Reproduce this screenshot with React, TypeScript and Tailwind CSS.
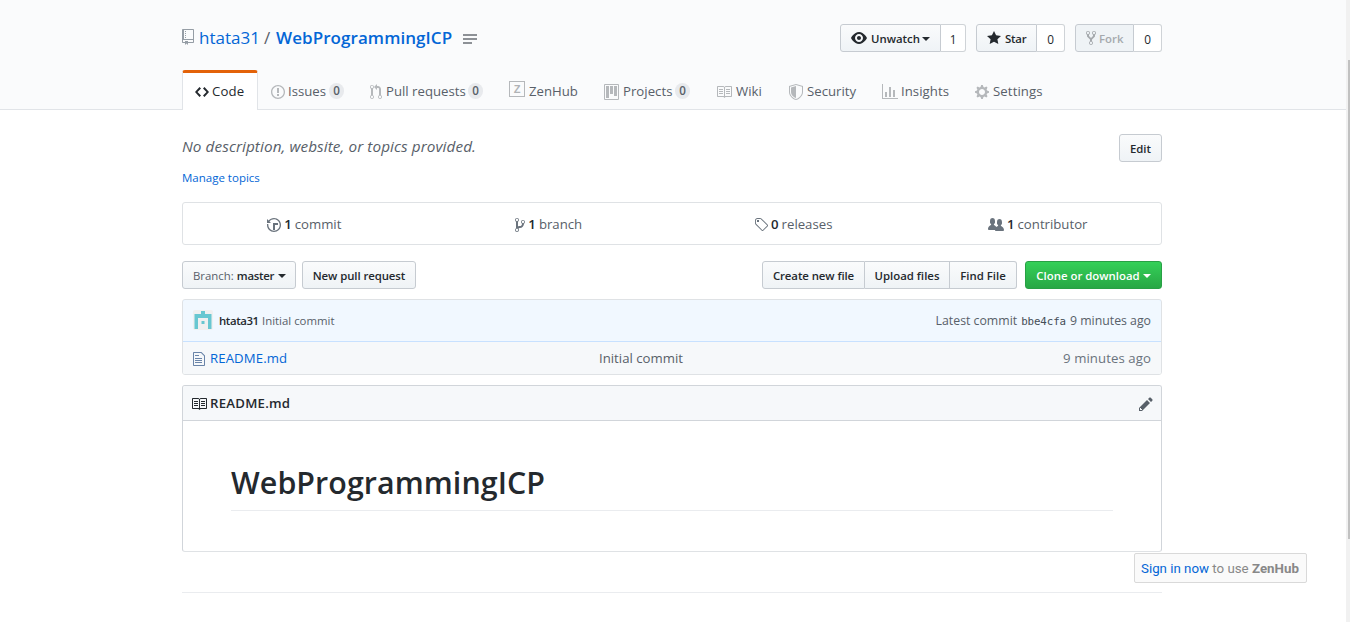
import React from "react";

type IconProps = { d: string; w: number; className?: string };

function Octicon({ d, w, className = "" }: IconProps) {
  return (
    <svg
      width={w}
      height={16}
      viewBox={`0 0 ${w} 16`}
      fill="currentColor"
      fillRule="evenodd"
      className={`shrink-0 ${className}`}
      aria-hidden="true"
    >
      <path d={d} />
    </svg>
  );
}

const icons = {
  repo: "M4 9H3V8h1v1zm0-3H3v1h1V6zm0-2H3v1h1V4zm0-2H3v1h1V2zm8-1v12c0 .55-.45 1-1 1H6v2l-1.5-1.5L3 16v-2H1c-.55 0-1-.45-1-1V1c0-.55.45-1 1-1h10c.55 0 1 .45 1 1zm-1 10H1v2h2v-1h3v1h5v-2zm0-10H2v9h9V1z",
  eye: "M8.06 2C3 2 0 8 0 8s3 6 8.06 6C13 14 16 8 16 8s-3-6-7.94-6zM8 12c-2.2 0-4-1.78-4-4 0-2.2 1.8-4 4-4 2.22 0 4 1.8 4 4 0 2.22-1.78 4-4 4zm2-4c0 1.11-.89 2-2 2-1.11 0-2-.89-2-2 0-1.11.89-2 2-2 1.11 0 2 .89 2 2z",
  star: "M14 6l-4.9-.64L7 1 4.9 5.36 0 6l3.6 3.26L2.67 14 7 11.67 11.33 14l-.93-4.74L14 6z",
  fork: "M8 1a1.993 1.993 0 0 0-1 3.72V6L5 8 3 6V4.72A1.993 1.993 0 0 0 2 1a1.993 1.993 0 0 0-1 3.72V6.5l3 3v1.78A1.993 1.993 0 0 0 5 15a1.993 1.993 0 0 0 1-3.72V9.5l3-3V4.72A1.993 1.993 0 0 0 8 1zM2 4.2C1.34 4.2.8 3.65.8 3c0-.65.55-1.2 1.2-1.2.65 0 1.2.55 1.2 1.2 0 .65-.55 1.2-1.2 1.2zm3 10c-.66 0-1.2-.55-1.2-1.2 0-.65.55-1.2 1.2-1.2.65 0 1.2.55 1.2 1.2 0 .65-.55 1.2-1.2 1.2zm3-10c-.66 0-1.2-.55-1.2-1.2 0-.65.55-1.2 1.2-1.2.65 0 1.2.55 1.2 1.2 0 .65-.55 1.2-1.2 1.2z",
  code: "M9.5 3L8 4.5 11.5 8 8 11.5 9.5 13 14 8 9.5 3zm-5 0L0 8l4.5 5L6 11.5 2.5 8 6 4.5 4.5 3z",
  issue: "M7 2.3c3.14 0 5.7 2.56 5.7 5.7s-2.56 5.7-5.7 5.7A5.71 5.71 0 0 1 1.3 8c0-3.14 2.56-5.7 5.7-5.7zM7 1C3.14 1 0 4.14 0 8s3.14 7 7 7 7-3.14 7-7-3.14-7-7-7zm1 3H6v5h2V4zm0 6H6v2h2v-2z",
  pull: "M11 11.28V5c-.03-.78-.34-1.47-.94-2.06C9.46 2.35 8.78 2.03 8 2H7V0L4 3l3 3V4h1c.27.02.48.11.69.31.21.2.3.42.31.69v6.28A1.993 1.993 0 0 0 10 15a1.993 1.993 0 0 0 1-3.72zm-1 2.92c-.66 0-1.2-.55-1.2-1.2 0-.65.55-1.2 1.2-1.2.65 0 1.2.55 1.2 1.2 0 .65-.55 1.2-1.2 1.2zM4 3c0-1.11-.89-2-2-2a1.993 1.993 0 0 0-1 3.72v6.56A1.993 1.993 0 0 0 2 15a1.993 1.993 0 0 0 1-3.72V4.72c.59-.34 1-.98 1-1.72zm-.8 10c0 .66-.55 1.2-1.2 1.2-.65 0-1.2-.55-1.2-1.2 0-.65.55-1.2 1.2-1.2.65 0 1.2.55 1.2 1.2zM2 4.2C1.34 4.2.8 3.65.8 3c0-.65.55-1.2 1.2-1.2.65 0 1.2.55 1.2 1.2 0 .65-.55 1.2-1.2 1.2z",
  project:
    "M10 12h3V2h-3v10zm-4-2h3V2H6v8zm-4 4h3V2H2v12zm-1 1h13V1H1v14zM14 0H1a1 1 0 0 0-1 1v14a1 1 0 0 0 1 1h13a1 1 0 0 0 1-1V1a1 1 0 0 0-1-1z",
  book: "M3 5h4v1H3V5zm0 3h4V7H3v1zm0 2h4V9H3v1zm11-5h-4v1h4V5zm0 2h-4v1h4V7zm0 2h-4v1h4V9zm2-6v9c0 .55-.45 1-1 1H9.5l-1 1-1-1H2c-.55 0-1-.45-1-1V3c0-.55.45-1 1-1h5.5l1 1 1-1H15c.55 0 1 .45 1 1zm-8 .5L7.5 3H2v9h6V3.5zm7-.5H9.5l-.5.5V12h6V3z",
  shield:
    "M0 2l7-2 7 2v6.02C14 12.69 8.69 16 7 16c-1.69 0-7-3.31-7-7.98V2zm1 .75L7 1l6 1.75v5.268C13 12.104 8.449 15 7 15c-1.449 0-6-2.896-6-6.982V2.75zm1 .75L7 2v12c-1.207 0-5-2.482-5-5.985V3.5z",
  graph: "M16 14v1H0V0h1v14h15zM5 13H3V8h2v5zm4 0H7V3h2v10zm4 0h-2V6h2v7z",
  gear: "M14 8.77v-1.6l-1.94-.64-.45-1.09.88-1.84-1.13-1.13-1.81.91-1.09-.45-.69-1.92h-1.6l-.63 1.94-1.11.45-1.84-.88-1.13 1.13.91 1.81-.45 1.09L0 7.23v1.59l1.94.64.45 1.09-.88 1.84 1.13 1.13 1.81-.91 1.09.45.69 1.92h1.59l.63-1.94 1.11-.45 1.84.88 1.13-1.13-.92-1.81.47-1.09L14 8.75v.02zM7 11c-1.66 0-3-1.34-3-3s1.34-3 3-3 3 1.34 3 3-1.34 3-3 3z",
  history:
    "M8 13H6V6h5v2H8v5zM7 1C4.81 1 2.87 2.02 1.59 3.59L0 2v4h4L2.5 4.5C3.55 3.17 5.17 2.3 7 2.3c3.14 0 5.7 2.56 5.7 5.7s-2.56 5.7-5.7 5.7A5.71 5.71 0 0 1 1.3 8c0-.34.03-.67.09-1H.08C.03 7.33 0 7.66 0 8c0 3.86 3.14 7 7 7s7-3.14 7-7-3.14-7-7-7z",
  branch:
    "M10 5c0-1.11-.89-2-2-2a1.993 1.993 0 0 0-1 3.72v.3c-.02.52-.23.98-.63 1.38-.4.4-.86.61-1.38.63-.83.02-1.48.16-2 .45V4.72a1.993 1.993 0 0 0-1-3.72C.88 1 0 1.89 0 3a2 2 0 0 0 1 1.72v6.56c-.59.35-1 .99-1 1.72 0 1.11.89 2 2 2 1.11 0 2-.89 2-2 0-.53-.2-1-.53-1.36.09-.06.48-.41.59-.47.25-.11.56-.17.94-.17 1.05-.05 1.95-.45 2.75-1.25S8.95 7.77 9 6.73h-.02C9.59 6.37 10 5.73 10 5zM2 1.8c.66 0 1.2.55 1.2 1.2 0 .65-.55 1.2-1.2 1.2C1.35 4.2.8 3.65.8 3c0-.65.55-1.2 1.2-1.2zm0 12.41c-.66 0-1.2-.55-1.2-1.2 0-.65.55-1.2 1.2-1.2.65 0 1.2.55 1.2 1.2 0 .65-.55 1.2-1.2 1.2zm6-8c-.66 0-1.2-.55-1.2-1.2 0-.65.55-1.2 1.2-1.2.65 0 1.2.55 1.2 1.2 0 .65-.55 1.2-1.2 1.2z",
  tag: "M7.73 1.73C7.26 1.26 6.62 1 5.96 1H3.5C2.13 1 1 2.13 1 3.5v2.47c0 .66.27 1.3.73 1.77l6.06 6.06c.39.39 1.02.39 1.41 0l4.59-4.59a.996.996 0 0 0 0-1.41L7.73 1.73zM2.38 7.09c-.31-.3-.47-.7-.47-1.13V3.5c0-.88.72-1.59 1.59-1.59h2.47c.42 0 .83.16 1.13.47l6.14 6.13-4.73 4.73-6.13-6.15zM3.01 3h2v2H3V3h.01z",
  organization:
    "M16 12.999c0 .439-.45 1-1 1H7.995c-.539 0-.994-.447-.995-.999H1c-.54 0-1-.561-1-1 0-2.634 3-4 3-4s.229-.409 0-1c-.841-.621-1.058-.59-1-3 .058-2.419 1.367-3 2.5-3s2.442.58 2.5 3c.058 2.41-.159 2.379-1 3-.229.59 0 1 0 1s1.549.711 2.42 2.088C9.196 9.369 10 8.999 10 8.999s.229-.409 0-1c-.841-.62-1.058-.59-1-3 .058-2.419 1.367-3 2.5-3s2.437.581 2.495 3c.059 2.41-.158 2.38-1 3-.229.59 0 1 0 1s3.005 1.366 3.005 4z",
  file: "M6 5H2V4h4v1zM2 8h7V7H2v1zm0 2h7V9H2v1zm0 2h7v-1H2v1zm10-7.5V14c0 .55-.45 1-1 1H1c-.55 0-1-.45-1-1V2c0-.55.45-1 1-1h7.5L12 4.5zM11 5L8 2H1v12h10V5z",
  pencil:
    "M0 12v3h3l8-8-3-3-8 8zm3 2H1v-2h1v1h1v1zm10.3-9.3L12 6 9 3l1.3-1.3a.996.996 0 0 1 1.41 0l1.59 1.59c.39.39.39 1.02 0 1.41z",
};

function Caret({ className = "" }: { className?: string }) {
  return (
    <span
      className={`inline-block shrink-0 border-x-4 border-t-4 border-x-transparent border-t-current ${className}`}
    />
  );
}

const btnBase =
  "flex h-7 items-center border border-[#c6cbd1] bg-linear-to-b to-[#eff3f6] pt-px text-[11.4px] font-semibold";
const btn = `${btnBase} from-[#fafbfc] text-[#24292e]`;
const btnDisabled = `${btnBase} from-[#eff3f6] text-[#a5a9ad]`;

const count =
  "flex h-7 items-center justify-center rounded-r-[3px] border border-l-0 border-[#cfd3d7] bg-white pt-px text-[11.8px] font-medium text-[#24292e]";

function ZenIcon() {
  return (
    <span className="-mt-[3px] flex h-4 w-4 shrink-0 items-center justify-center border border-[#b5b8bb] font-['Liberation_Sans',sans-serif] text-[11px] leading-none font-bold text-[#b0b3b6]">
      Z
    </span>
  );
}

const tabs: { label: string; icon?: string; w?: number; width: string; text: string; count?: string }[] = [
  { label: "Issues", icon: icons.issue, w: 14, width: "w-[99px]", text: "ml-[3px] w-[37px]", count: "0" },
  { label: "Pull requests", icon: icons.pull, w: 12, width: "w-[139px]", text: "ml-1 w-[78px]", count: "0" },
  { label: "ZenHub", width: "w-[95px]", text: "ml-1 w-[50px]" },
  { label: "Projects", icon: icons.project, w: 15, width: "w-[112px]", text: "ml-1 w-12 tracking-[0.02px]", count: "0" },
  { label: "Wiki", icon: icons.book, w: 16, width: "w-[73px]", text: "ml-1 w-[27px]" },
  { label: "Security", icon: icons.shield, w: 14, width: "w-[93px]", text: "ml-1 w-[49px]" },
  { label: "Insights", icon: icons.graph, w: 16, width: "w-[93px]", text: "ml-[3px] w-[49px] tracking-[0.05px]" },
  { label: "Settings", icon: icons.gear, w: 14, width: "w-[94px]", text: "ml-1 w-[50px] tracking-[0.1px]" },
];

const stats = [
  { n: "1", label: "commit", icon: icons.history, w: 14 },
  { n: "1", label: "branch", icon: icons.branch, w: 10 },
  { n: "0", label: "releases", icon: icons.tag, w: 14 },
  { n: "1", label: "contributor", icon: icons.organization, w: 16 },
];

export default function App() {
  return (
    <div className="relative flex h-[622px] w-[1350px] overflow-hidden bg-white font-['Open_Sans','Noto_Sans',sans-serif] text-[13.2px] leading-5 whitespace-nowrap text-[#24292e]">
      <div className="w-[1346px]">
        <header className="h-[110px] border-b border-[#e1e4e8] bg-[#fafbfc] pl-[182px]">
          <div className="flex h-[70px] w-[980px] items-start justify-between pt-6">
            <h1 className="flex h-7 items-center text-[17px] text-[#0366d6]">
              <Octicon d={icons.repo} w={12} className="-mt-0.5 mr-[5px] text-[#959da5]" />
              <span className="w-[61px]">htata31</span>
              <span className="ml-1 w-3 text-[#586069]">/</span>
              <span className="w-[177px] font-semibold tracking-[0.07px]">WebProgrammingICP</span>
              <span className="mt-0.5 ml-[10px] flex flex-col gap-0.5">
                <span className="h-0.5 w-3.5 bg-[#8d9196]" />
                <span className="h-0.5 w-3.5 bg-[#8d9196]" />
                <span className="h-0.5 w-[9px] bg-[#8d9196]" />
              </span>
            </h1>
            <div className="flex gap-2.5">
              <div className="flex">
                <button className={`${btn} w-[101px] rounded-l-[3px] pl-2.5`}>
                  <Octicon d={icons.eye} w={16} className="-mt-px mr-1" />
                  <span className="w-[47px] text-left">Unwatch</span>
                  <Caret className="ml-1" />
                </button>
                <span className={`${count} w-[25px]`}>1</span>
              </div>
              <div className="flex">
                <button className={`${btn} w-[61px] rounded-l-[3px] pl-2.5`}>
                  <Octicon d={icons.star} w={14} className="-mt-px mr-1" />
                  <span className="tracking-[-0.2px]">Star</span>
                </button>
                <span className={`${count} w-7`}>0</span>
              </div>
              <div className="flex">
                <button className={`${btnDisabled} w-[59px] rounded-l-[3px] pl-2.5`}>
                  <Octicon d={icons.fork} w={10} className="-mt-px mr-[3px]" />
                  Fork
                </button>
                <span className={`${count} w-7`}>0</span>
              </div>
            </div>
          </div>
          <nav className="flex h-10 items-stretch text-[#586069]">
            <a className="flex w-[76px] items-center rounded-t-[3px] border-x border-t-[3px] border-x-[#e1e4e8] border-t-[#e36209] bg-white pb-0.5 pl-3 text-[#24292e]">
              <Octicon d={icons.code} w={14} className="mt-[3px] mr-[3px]" />
              <span className="tracking-[0.15px]">Code</span>
            </a>
            {tabs.map((t) => (
              <a key={t.label} className={`flex items-center pt-px pl-[13px] ${t.width}`}>
                {t.icon ? (
                  <Octicon d={t.icon} w={t.w ?? 16} className="mt-[3px] text-[#b5b8bb]" />
                ) : (
                  <ZenIcon />
                )}
                <span className={t.text}>{t.label}</span>
                {t.count && (
                  <span className="ml-1 flex h-4 w-[15px] items-center justify-center rounded-full bg-[#e8eaed] pt-px text-[11.6px] leading-none font-semibold">
                    {t.count}
                  </span>
                )}
              </a>
            ))}
          </nav>
        </header>

        <main className="ml-[182px] w-[980px]">
          <div className="flex h-[92px] justify-between pt-6">
            <div>
              <p className="text-[15.3px] leading-6 tracking-[0.08px] text-[#586069] italic">
                No description, website, or topics provided.
              </p>
              <a className="mt-[11px] block text-[11.5px] leading-[18px] text-[#0366d6]">Manage topics</a>
            </div>
            <button className={`${btn} w-[43px] justify-center rounded-[3px]`}>Edit</button>
          </div>

          <div className="flex h-[43px] items-center rounded-[3px] border border-[#dfe2e5] text-[#586069]">
            {stats.map((s) => (
              <div key={s.label} className="flex flex-1 items-center justify-center pr-0.5">
                <Octicon d={s.icon} w={s.w} className="mt-0.5 mr-1 text-[#6a737d]" />
                <span className="mr-[3px] -ml-px font-semibold text-[#24292e]">{s.n}</span>
                {s.label}
              </div>
            ))}
          </div>

          <div className="mt-4 flex h-7">
            <button className={`${btn} w-[114px] rounded-[3px] pl-2.5`}>
              <span className="mr-[3px] font-normal text-[#586069]">Branch:</span>
              <span className="w-[37px] text-left tracking-[-0.25px]">master</span>
              <Caret className="ml-1" />
            </button>
            <button className={`${btn} ml-1.5 w-[114px] justify-center rounded-[3px] tracking-[-0.08px]`}>
              New pull request
            </button>
            <div className="ml-auto flex">
              <button className={`${btn} w-[103px] justify-center rounded-l-[3px] tracking-[-0.08px]`}>
                Create new file
              </button>
              <button className={`${btn} w-[85px] justify-center border-l-0`}>Upload files</button>
              <button className={`${btn} w-[67px] justify-center rounded-r-[3px] border-l-0`}>Find File</button>
            </div>
            <button className="ml-2 flex h-7 w-[137px] items-center justify-center rounded-[3px] border border-[#28a045] bg-linear-to-b from-[#34d058] to-[#28a745] pt-px text-[11.4px] font-semibold text-white">
              Clone or download
              <Caret className="ml-[3px]" />
            </button>
          </div>

          <section className="mt-2.5 h-[76px] overflow-hidden rounded-[3px] border border-[#dfe2e5]">
            <div className="-mx-px -mt-px flex h-[43px] items-center rounded-t-[3px] border border-[#c8e1ff] bg-[#f1f8ff] px-2.5 text-[12.3px] text-[#586069]">
              <svg width="20" height="20" viewBox="0 0 20 20" className="-mt-0.5 mr-1.5" aria-hidden="true">
                <rect width="20" height="20" rx="2" fill="#f0f0f0" />
                <path d="M8 1h4v3h6.500v15h-3.500V8H5v11H1.500V4H8zM8.500 11h3v3h-3z" fill="#68c7d1" />
              </svg>
              <span className="w-[43px] text-[11.4px] font-semibold tracking-[-0.4px] text-[#24292e]">htata31</span>
              <span className="text-[11.4px]">Initial commit</span>
              <span className="ml-auto">Latest commit</span>
              <span className="mx-1 pt-0.5 font-['DejaVu_Sans_Mono','Liberation_Mono',monospace] text-[10.8px] tracking-[-0.1px] text-[#444d56]">
                bbe4cfa
              </span>
              <span>9 minutes ago</span>
            </div>
            <div className="flex h-8 items-center bg-[#f6f8fa] pr-2.5 pl-2.5">
              <Octicon d={icons.file} w={12} className="mt-0.5 text-[#6a84a8]" />
              <a className="ml-[5px] w-[389px] tracking-[0.1px] text-[#0366d6]">README.md</a>
              <span className="text-[#586069]">Initial commit</span>
              <span className="ml-auto tracking-[0.08px] text-[#6a737d]">9 minutes ago</span>
            </div>
          </section>

          <section className="mt-2.5 h-[167px] rounded-[3px] border border-[#d1d5da] border-b-[#dfe2e5]">
            <div className="flex h-[35px] items-center rounded-t-[2px] border-b border-[#d1d5da] bg-[#f6f8fa] pr-2 pl-2">
              <Octicon d={icons.book} w={16} className="mt-0.5" />
              <h3 className="ml-[3px] font-semibold tracking-[0.25px]">README.md</h3>
              <Octicon d={icons.pencil} w={14} className="mt-0.5 ml-auto text-[#586069]" />
            </div>
            <div className="px-12 pt-10">
              <h1 className="h-[50px] border-b border-[#eaecef] text-[30.4px] leading-[44px] font-semibold tracking-[0.07px]">
                WebProgrammingICP
              </h1>
            </div>
          </section>

          <div className="mt-10 border-t border-[#eaecef]" />
        </main>
      </div>

      <div className="w-1 bg-[#f1f1f1] pt-[60px] pl-0.5">
        <div className="h-[479px] w-0.5 bg-[#c1c1c1]" />
      </div>

      <div className="absolute top-[553px] left-[1134px] flex h-[30px] w-[173px] items-center rounded-[2px] border border-[#d9d9d9] bg-[#fafafa] pt-px pl-1.5 font-['Roboto','Liberation_Sans',sans-serif] text-[13.3px] text-[#888]">
        <span className="whitespace-pre">
          <a className="text-[#0366d6]">Sign in now</a> to use <b className="font-bold">ZenHub</b>
        </span>
      </div>
    </div>
  );
}
